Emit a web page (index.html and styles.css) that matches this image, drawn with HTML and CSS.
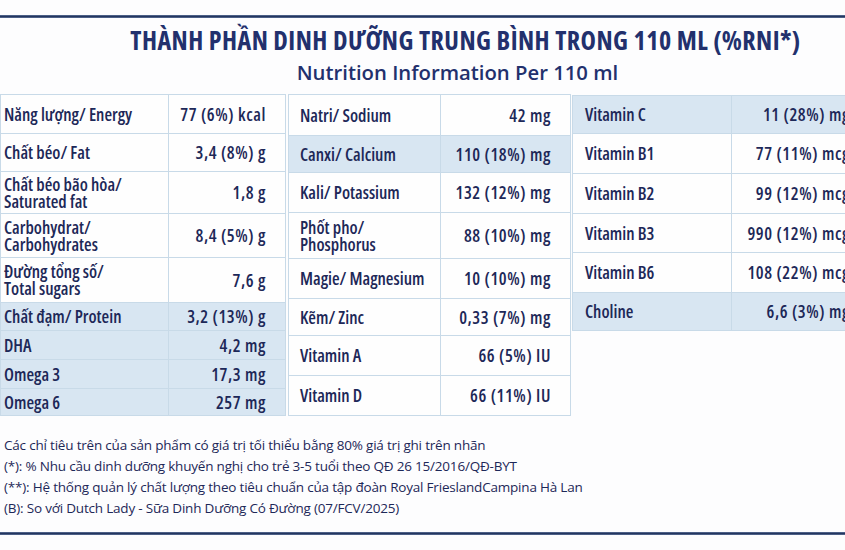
FILE: index.html
```html
<!DOCTYPE html>
<html lang="vi">
<head>
<meta charset="utf-8">
<title>Thành phần dinh dưỡng</title>
<link rel="stylesheet" href="styles.css">
</head>
<body>
<div class="page">
  <div class="rule"></div>
  <header class="head">
    <h1 class="title">THÀNH PHẦN DINH DƯỠNG TRUNG BÌNH TRONG 110 ML (%RNI*)</h1>
    <h2 class="subtitle">Nutrition Information Per 110 ml</h2>
  </header>
  <section class="tables">
    <table class="nt t1">
      <colgroup><col class="c-lab"><col></colgroup>
      <tr><td class="lab">Năng lượng/ Energy</td><td class="val">77 (6%) kcal</td></tr>
      <tr><td class="lab">Chất béo/ Fat</td><td class="val">3,4 (8%) g</td></tr>
      <tr><td class="lab">Chất béo bão hòa/<br>Saturated fat</td><td class="val">1,8 g</td></tr>
      <tr><td class="lab">Carbohydrat/<br>Carbohydrates</td><td class="val">8,4 (5%) g</td></tr>
      <tr><td class="lab">Đường tổng số/<br>Total sugars</td><td class="val">7,6 g</td></tr>
      <tr class="blue"><td class="lab">Chất đạm/ Protein</td><td class="val">3,2 (13%) g</td></tr>
      <tr class="blue"><td class="lab">DHA</td><td class="val">4,2 mg</td></tr>
      <tr class="blue"><td class="lab">Omega 3</td><td class="val">17,3 mg</td></tr>
      <tr class="blue"><td class="lab">Omega 6</td><td class="val">257 mg</td></tr>
    </table>
    <table class="nt t2">
      <colgroup><col class="c-lab"><col></colgroup>
      <tr><td class="lab">Natri/ Sodium</td><td class="val">42 mg</td></tr>
      <tr class="blue"><td class="lab">Canxi/ Calcium</td><td class="val">110 (18%) mg</td></tr>
      <tr><td class="lab">Kali/ Potassium</td><td class="val">132 (12%) mg</td></tr>
      <tr><td class="lab">Phốt pho/<br>Phosphorus</td><td class="val">88 (10%) mg</td></tr>
      <tr><td class="lab">Magie/ Magnesium</td><td class="val">10 (10%) mg</td></tr>
      <tr><td class="lab">Kẽm/ Zinc</td><td class="val">0,33 (7%) mg</td></tr>
      <tr><td class="lab">Vitamin A</td><td class="val">66 (5%) IU</td></tr>
      <tr><td class="lab">Vitamin D</td><td class="val">66 (11%) IU</td></tr>
    </table>
    <table class="nt t3">
      <colgroup><col class="c-lab"><col></colgroup>
      <tr class="blue"><td class="lab">Vitamin C</td><td class="val">11 (28%) mg</td></tr>
      <tr><td class="lab">Vitamin B1</td><td class="val">77 (11%) mcg</td></tr>
      <tr><td class="lab">Vitamin B2</td><td class="val">99 (12%) mcg</td></tr>
      <tr><td class="lab">Vitamin B3</td><td class="val">990 (12%) mcg</td></tr>
      <tr><td class="lab">Vitamin B6</td><td class="val">108 (22%) mcg</td></tr>
      <tr class="blue"><td class="lab">Choline</td><td class="val">6,6 (3%) mg</td></tr>
    </table>
  </section>
  <footer class="notes">
    <p>Các chỉ tiêu trên của sản phẩm có giá trị tối thiểu bằng 80% giá trị ghi trên nhãn</p>
    <p>(*): % Nhu cầu dinh dưỡng khuyến nghị cho trẻ 3-5 tuổi theo QĐ 26 15/2016/QĐ-BYT</p>
    <p>(**): Hệ thống quản lý chất lượng theo tiêu chuẩn của tập đoàn Royal FrieslandCampina Hà Lan</p>
    <p>(B): So với Dutch Lady - Sữa Dinh Dưỡng Có Đường (07/FCV/2025)</p>
  </footer>
  <div class="rule bottom"></div>
</div>
</body>
</html>
```
FILE: styles.css
```css
html, body {
  margin: 0;
  padding: 0;
  background: #fdfdfe;
  overflow: hidden;
}
.page {
  width: 880px;
  height: 550px;
  padding-top: 15px;
  box-sizing: border-box;
  font-family: "Open Sans", sans-serif;
  font-stretch: 75%;
  color: #1d2858;
}
.rule {
  height: 3px;
  background: linear-gradient(#5f739a, #24365f 50%, #5f739a);
}
.rule.bottom {
  margin-top: 13px;
}
.head {
  padding-left: 86px;
  text-align: center;
  width: 845px;
  box-sizing: border-box;
  white-space: nowrap;
}
.title {
  margin: 7px 0 0;
  font-size: 26px;
  line-height: 30px;
  font-weight: 700;
  letter-spacing: 0.45px;
  color: #22306d;
}
.subtitle {
  margin: 5px 0 0;
  font-size: 20.3px;
  line-height: 24px;
  font-weight: 600;
  font-stretch: 100%;
  color: #22306d;
  padding-right: 16px;
}
.tables {
  display: flex;
  align-items: flex-start;
  margin-top: 10px;
}
.nt {
  border-collapse: collapse;
  table-layout: fixed;
  font-size: 17.5px;
  line-height: 17px;
  font-weight: 650;
  background: #fefefe;
}
.nt td {
  border: 1px solid #c8dae8;
  padding: 0;
  vertical-align: middle;
  white-space: nowrap;
  overflow: visible;
}
.nt tr.blue td {
  background: #d8e6f2;
}
.nt .val {
  text-align: right;
  padding-right: 19px;
  letter-spacing: 0.6px;
}
.t1 { width: 286px; }
.t1 .c-lab { width: 168px; }
.t1 .lab { padding-left: 3px; }
.t2 { width: 283px; margin-left: 2px; }
.t2 .c-lab { width: 152px; }
.t2 .lab { padding-left: 11px; }
.t3 { width: 298px; margin-left: 1px; margin-top: 1px; }
.t3 .c-lab { width: 159px; }
.t3 .lab { padding-left: 12px; }

.t1 tr:nth-child(1) { height: 39px; }
.t1 tr:nth-child(2) { height: 38px; }
.t1 tr:nth-child(3) { height: 42px; }
.t1 tr:nth-child(4) { height: 44px; }
.t1 tr:nth-child(5) { height: 45px; }
.t1 tr:nth-child(6) { height: 28px; }
.t1 tr:nth-child(7) { height: 29px; }
.t1 tr:nth-child(8) { height: 29px; }
.t1 tr:nth-child(9) { height: 27px; }

.t2 tr:nth-child(1) { height: 41px; }
.t2 tr:nth-child(2) { height: 37px; }
.t2 tr:nth-child(3) { height: 40px; }
.t2 tr:nth-child(4) { height: 46px; }
.t2 tr:nth-child(5) { height: 40px; }
.t2 tr:nth-child(6) { height: 37px; }
.t2 tr:nth-child(7) { height: 40px; }
.t2 tr:nth-child(8) { height: 40px; }

.t3 tr:nth-child(1) { height: 38px; }
.t3 tr:nth-child(2) { height: 40px; }
.t3 tr:nth-child(3) { height: 40px; }
.t3 tr:nth-child(4) { height: 39px; }
.t3 tr:nth-child(5) { height: 40px; }
.t3 tr:nth-child(6) { height: 38px; }

.notes {
  margin-top: 19px;
  padding-left: 4px;
  font-size: 13.5px;
  line-height: 21px;
  font-weight: 500;
  font-stretch: 100%;
  letter-spacing: -0.2px;
  color: #1d2858;
}
.notes p {
  margin: 0;
}
```
